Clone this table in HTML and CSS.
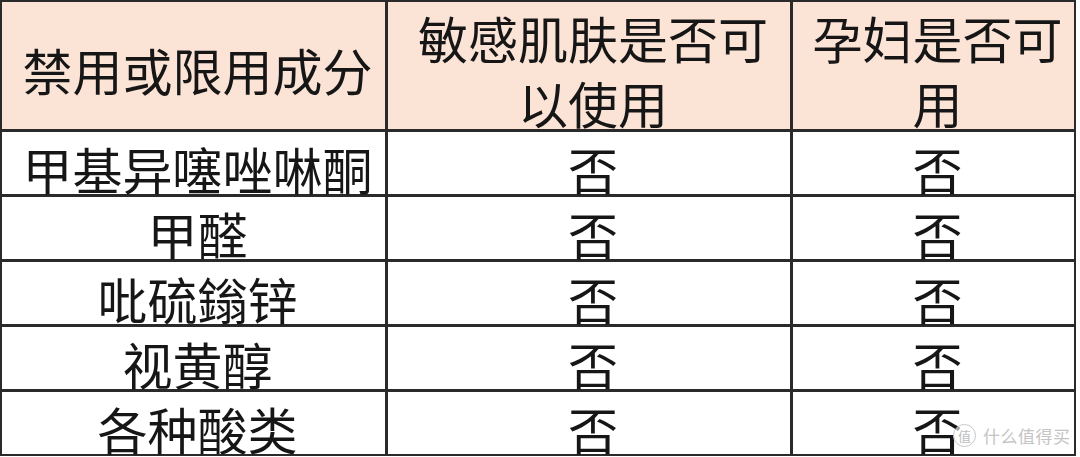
FILE: index.html
```html
<!DOCTYPE html>
<html lang="zh-CN">
<head>
<meta charset="utf-8">
<title>禁用或限用成分</title>
<link rel="stylesheet" href="styles.css">
</head>
<body>
<div class="page">
  <div class="grid">
    <div class="cell head">禁用或限用成分</div>
    <div class="cell head">敏感肌肤是否可<br>以使用</div>
    <div class="cell head">孕妇是否可<br>用</div>

    <div class="cell">甲基异噻唑啉酮</div>
    <div class="cell">否</div>
    <div class="cell">否</div>

    <div class="cell">甲醛</div>
    <div class="cell">否</div>
    <div class="cell">否</div>

    <div class="cell">吡硫鎓锌</div>
    <div class="cell">否</div>
    <div class="cell">否</div>

    <div class="cell">视黄醇</div>
    <div class="cell">否</div>
    <div class="cell">否</div>

    <div class="cell">各种酸类</div>
    <div class="cell">否</div>
    <div class="cell">否</div>
  </div>
  <div class="watermark">
    <span class="wm-circle">值</span>
    <span class="wm-text">什么值得买</span>
  </div>
</div>
</body>
</html>
```
FILE: styles.css
```css
html, body {
  margin: 0;
  padding: 0;
  background: #ffffff;
}

body {
  font-family: "Noto Sans CJK SC", "Noto Sans", sans-serif;
  color: #161616;
}

.page {
  position: relative;
  width: 1080px;
  height: 457px;
}

.grid {
  display: grid;
  grid-template-columns: 383px 402px 281px;
  grid-template-rows: 127px repeat(5, 62px);
  gap: 3px;
  padding: 2px;
  width: fit-content;
  background: #2a2a2a;
}

.cell {
  display: flex;
  align-items: center;
  justify-content: center;
  text-align: center;
  background: #ffffff;
  font-size: 50px;
  line-height: 50px;
  padding: 10px 0 0 8px;
  box-sizing: border-box;
  white-space: nowrap;
  overflow: visible;
}

.cell.head {
  background: #fbe3d6;
  line-height: 65px;
  padding-top: 8px;
}

.watermark {
  position: absolute;
  left: 953px;
  top: 424px;
  display: flex;
  align-items: center;
  gap: 7px;
  color: #c4c4c4;
}

.wm-circle {
  width: 21px;
  height: 21px;
  border: 1.5px solid #c8c8c8;
  border-radius: 50%;
  font-size: 13px;
  line-height: 21px;
  text-align: center;
  color: #bdbdbd;
  background: rgba(255, 255, 255, 0.6);
}

.wm-text {
  font-size: 17px;
  line-height: 22px;
  letter-spacing: 0.5px;
  text-shadow: 0 0 1px #ffffff;
}
```
